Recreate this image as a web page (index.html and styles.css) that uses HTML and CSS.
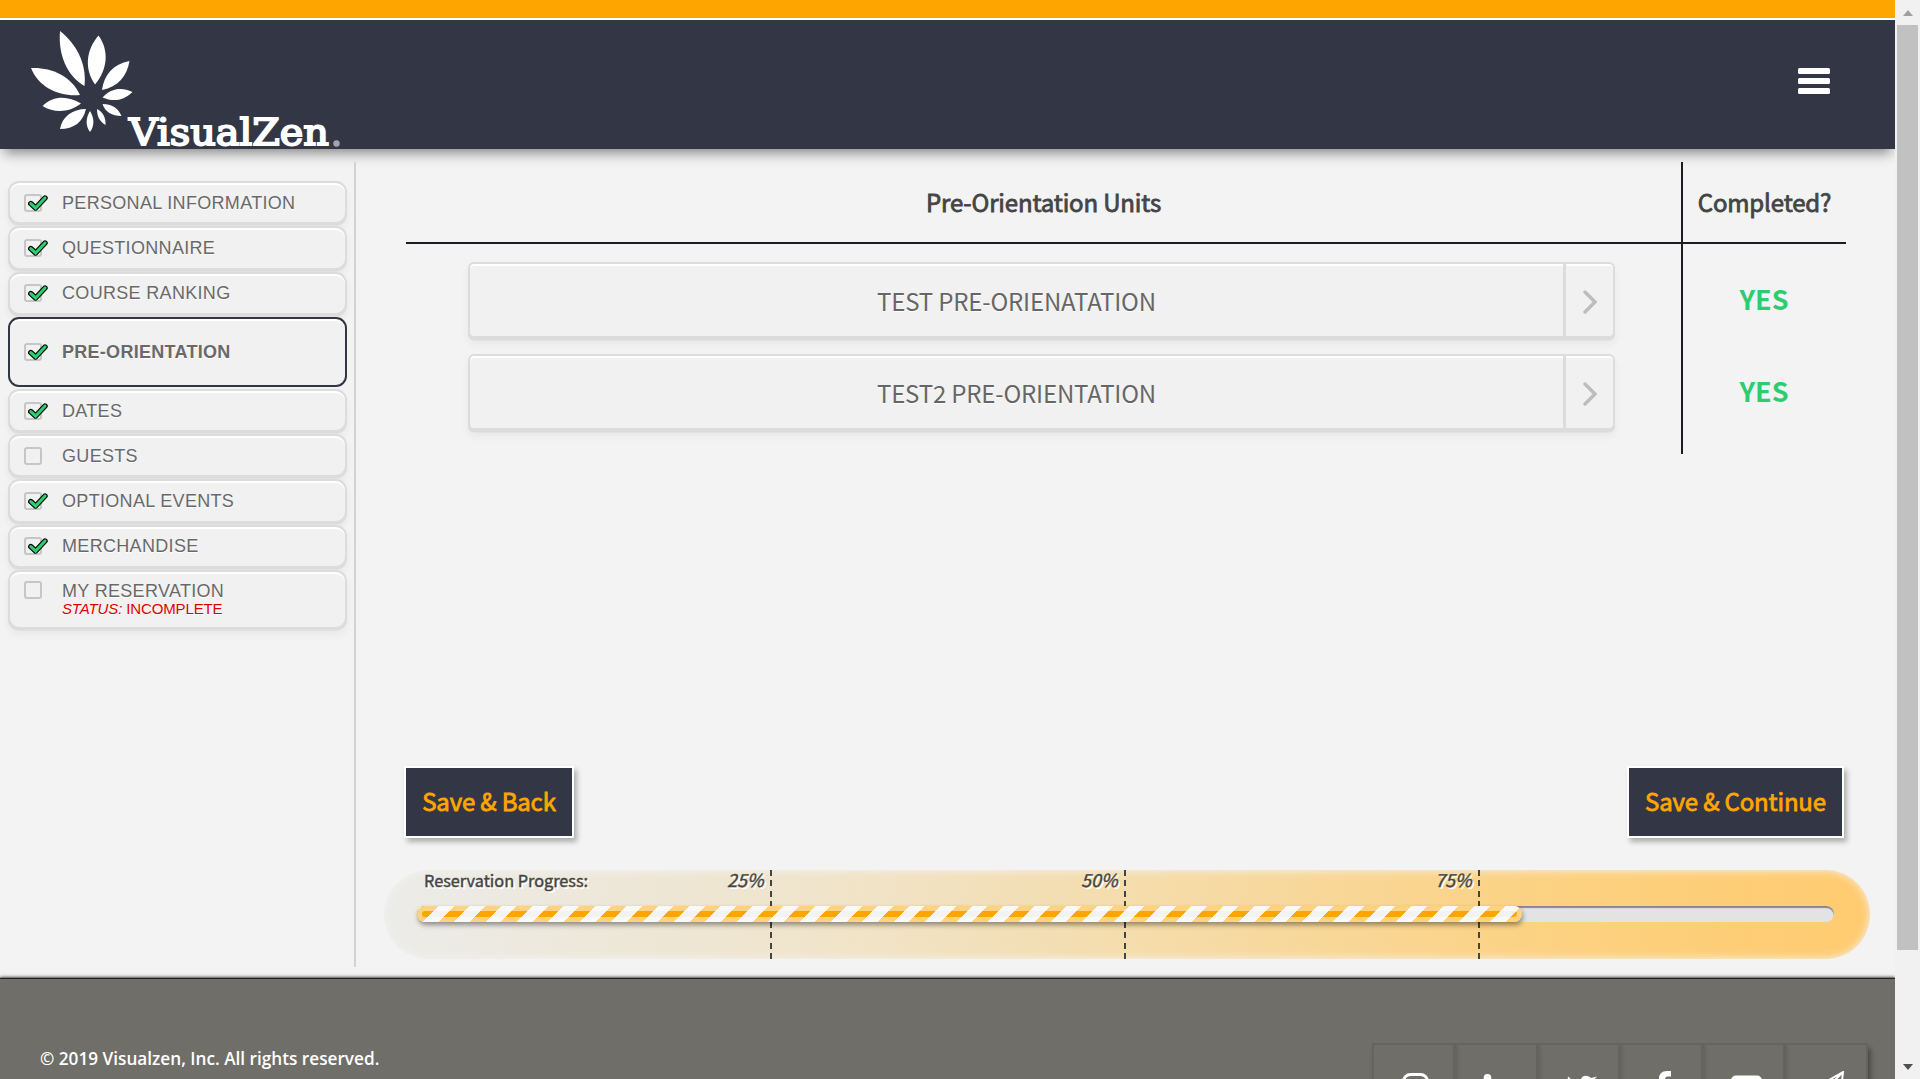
FILE: index.html
```html
<!DOCTYPE html>
<html lang="en">
<head>
<meta charset="utf-8">
<title>VisualZen - Pre-Orientation</title>
<link rel="stylesheet" href="styles.css">
</head>
<body>
<svg class="defs" width="0" height="0">
  <symbol id="tick" viewBox="0 0 20 16"><path d="M2.8 8.6 7.6 13 17 3" fill="none" stroke="#000" stroke-width="5.4" stroke-linecap="round" stroke-linejoin="round"/><path d="M2.8 8.6 7.6 13 17 3" fill="none" stroke="#2ecc71" stroke-width="3.2" stroke-linecap="round"/></symbol>
  <symbol id="chevron" viewBox="0 0 14 24"><path d="M2 2l10 10L2 22" fill="none" stroke="#bdbdbd" stroke-width="3.4" stroke-linecap="round"/></symbol>
</svg>
<div class="window">
  <div class="page">
    <div class="strip"></div>
    <header class="header">
      <svg class="logo" width="312" height="121" viewBox="30 28 312 121">
        <g fill="#fff">
          <path d="M60 31C75 43 87 62 84.500 86C67 76 58 55 60 31Z"/>
          <path d="M98.500 35.500C109 50 108 69 95 84.500C84 69 86 50 98.500 35.500Z"/>
          <path d="M31 68C50 67 71 75 80 95C60 97 39 88 31 68Z"/>
          <path d="M129.500 61C127 76 118 87 102 90C104 75 113 64 129.500 61Z"/>
          <path d="M132.500 92C123 101 113 102 102.500 97.500C111 88 122 87 132.500 92Z"/>
          <path d="M121.500 116C112 116 105 112 102.500 104C112 104 118 108 121.500 116Z"/>
          <path d="M42.500 106C54 95 68 96 81 103.500C69 113 54 113 42.500 106Z"/>
          <path d="M60 129C62 117 72 109 86 109C83 122 74 129 60 129Z"/>
          <path d="M90 111C94.500 118 94.500 126 90 132C85.500 126 85.500 118 90 111Z"/>
          <path d="M97 109C103 112 106 118 105.500 125C99 121 97 116 97 109Z"/>
        </g>
        <text class="logo-name" x="129" y="145" textLength="200" lengthAdjust="spacingAndGlyphs">VisualZen</text>
        <circle cx="336.500" cy="143.500" r="3.200" fill="#a3a5ae"/>
      </svg>
      <div class="menu"><i></i><i></i><i></i></div>
    </header>
    <div class="body">
      <nav class="steps">
        <div class="step"><span class="box"><svg><use href="#tick"/></svg></span><span>PERSONAL INFORMATION</span></div>
        <div class="step"><span class="box"><svg><use href="#tick"/></svg></span><span>QUESTIONNAIRE</span></div>
        <div class="step"><span class="box"><svg><use href="#tick"/></svg></span><span>COURSE RANKING</span></div>
        <div class="step active"><span class="box"><svg><use href="#tick"/></svg></span><span>PRE-ORIENTATION</span></div>
        <div class="step"><span class="box"><svg><use href="#tick"/></svg></span><span>DATES</span></div>
        <div class="step"><span class="box"></span><span>GUESTS</span></div>
        <div class="step"><span class="box"><svg><use href="#tick"/></svg></span><span>OPTIONAL EVENTS</span></div>
        <div class="step"><span class="box"><svg><use href="#tick"/></svg></span><span>MERCHANDISE</span></div>
        <div class="step last"><span class="box"></span><span>MY RESERVATION<small><em>STATUS:</em> INCOMPLETE</small></span></div>
      </nav>
      <main class="main">
        <section class="units">
          <div class="head"><span class="faux">Pre-Orientation Units</span></div>
          <div class="head done-head"><span class="faux">Completed?</span></div>
          <div class="list">
            <div class="unit"><span class="name">TEST PRE-ORIENATATION</span><span class="go"><svg width="14" height="24"><use href="#chevron"/></svg></span></div>
            <div class="unit"><span class="name">TEST2 PRE-ORIENTATION</span><span class="go"><svg width="14" height="24"><use href="#chevron"/></svg></span></div>
          </div>
          <div class="done"><span>YES</span><span>YES</span></div>
        </section>
        <div class="actions"><span class="btn back">Save &amp; Back</span><span class="btn next">Save &amp; Continue</span></div>
        <section class="progress">
          <div class="mark q1"><em>25%</em></div>
          <div class="mark q2"><em>50%</em></div>
          <div class="mark q3"><em>75%</em></div>
          <span class="label">Reservation Progress:</span>
          <div class="track"><div class="fill"></div></div>
        </section>
      </main>
    </div>
    <footer class="footer">
      <span class="copy">© 2019 Visualzen, Inc. All rights reserved.</span>
      <div class="social">
        <span><svg width="32" height="32" viewBox="0 0 32 32"><rect x="3.500" y="3.500" width="24" height="24" rx="7" fill="none" stroke="#fff" stroke-width="3"/></svg></span>
        <span><svg width="32" height="32" viewBox="0 0 32 32"><circle cx="4.500" cy="6.800" r="3.800" fill="#fff"/><path d="M1 13h7v17H1z" fill="#fff"/></svg></span>
        <span><svg width="32" height="32" viewBox="0 0 32 32"><path d="M31 5.500l-4 4C27 22 16 30 2 26c4 0 7-1 8-3-8-3-9-11-8-17.500 4 4 8 5.500 13 5.500-1-7 6-8 10-4z" fill="#fff"/></svg></span>
        <span><svg width="32" height="32" viewBox="0 0 32 32"><path d="M23 0v5.500h-3q-3 0-3 3V13h6v6h-6v13h-6V19H6v-6h5V8q0-8 8-8z" fill="#fff"/></svg></span>
        <span><svg width="32" height="32" viewBox="0 0 32 32"><rect x="0" y="4.500" width="31" height="22" rx="5" fill="#fff"/></svg></span>
        <span><svg width="32" height="32" viewBox="0 0 32 32"><path d="M30 1 2 17l8 4L30 1 27 28l-9-4-5 6v-8" fill="none" stroke="#fff" stroke-width="2"/></svg></span>
      </div>
    </footer>
  </div>
  <div class="scroll"><i class="up"></i><i class="thumb"></i><i class="down"></i></div>
</div>
</body>
</html>
```
FILE: styles.css
```css
* { box-sizing: border-box; }
body { margin: 0; overflow: hidden; font-family: "Noto Sans CJK SC", sans-serif; background: #f3f3f3; }
.defs { position: absolute; }
.window { display: flex; width: 1920px; height: 1079px; overflow: hidden; }
.page { width: 1895px; height: 1079px; display: flex; flex-direction: column; overflow: hidden; }
.strip { flex: none; height: 20px; background: #ffa500; border-bottom: 2px solid #fff; }
.header { flex: none; height: 129px; background: #333645; padding: 8px 65px 0 30px; display: flex; justify-content: space-between; box-shadow: 0 8px 12px -4px rgba(0,0,0,.45); }
.logo { overflow: visible; }
.logo-name { font: 400 37px "DejaVu Serif", serif; fill: #fff; stroke: #fff; stroke-width: 1.900px; }
.menu { display: flex; flex-direction: column; gap: 4.300px; padding-top: 40px; }
.menu i { width: 32px; height: 5.800px; background: #fff; border-radius: 1.500px; }
.body { flex: none; height: 830px; display: flex; padding-top: 13px; }
.steps { width: 356px; height: 805px; padding: 19px 8px 0; border-right: 2px solid #d3d3d3; display: flex; flex-direction: column; gap: 2px; }
.step { flex: none; width: 339px; height: 43.300px; padding-left: 14px; border: 2px solid #dcdcdc; border-radius: 11px; background: #f1f1f1; box-shadow: inset 0 2px 0 #fff, 0 1.500px 0 #dcdcdc, 0 5px 9px rgba(0,0,0,.05); display: flex; align-items: center; gap: 20px; font: 18px/20px "Liberation Sans", Arial, sans-serif; color: #696969; text-shadow: 0 1px 0 #fff; letter-spacing: .32px; }
.step.active { height: 70px; border-color: #333645; font-weight: 700; letter-spacing: .28px; box-shadow: inset 0 2px 0 #fff; }
.step.last { height: 59px; align-items: flex-start; padding-top: 9px; }
.step small { display: block; font-size: 15px; line-height: 16px; color: #e00000; letter-spacing: -.13px; }
.box { flex: none; width: 18px; height: 18px; border: 2px solid #c6c6c6; border-radius: 3px; position: relative; }
.box svg { position: absolute; left: 2px; top: -1px; width: 20px; height: 16px; }
.main { flex: 1; padding-left: 28px; }
.units { margin-left: 22px; width: 1440px; height: 292px; display: grid; grid-template-columns: 1275px 165px; grid-template-rows: 82px 210px; }
.head { border-bottom: 2px solid #1b1c20; display: flex; justify-content: center; font-size: 24px; line-height: 80px; letter-spacing: -.15px; color: #444; }
.faux { -webkit-text-stroke: .8px currentColor; }
.done-head, .done { border-left: 2px solid #1b1c20; }
.list { padding: 18px 66px 0 62px; display: flex; flex-direction: column; gap: 16px; }
.unit { height: 76px; border: 2px solid #dcdcdc; border-radius: 6px; background: #f1f1f1; box-shadow: inset 0 2px 0 #fff, 0 2.500px 0 #dcdcdc, 0 6px 10px rgba(0,0,0,.05); display: flex; }
.name { flex: 1; text-align: center; line-height: 74px; font-size: 24px; letter-spacing: -.18px; color: #666; text-shadow: 0 1px 0 #fff; }
.go { width: 50px; border-left: 3px solid #dcdcdc; display: flex; align-items: center; justify-content: center; padding-top: 4px; }
.done { display: flex; flex-direction: column; align-items: center; padding: 18px 1px 0 0; font-size: 27px; font-weight: 700; line-height: 73px; gap: 19px; color: #2ecc71; }
.actions { height: 72px; margin: 312px 51px 0 20px; display: flex; justify-content: space-between; }
.btn { height: 72px; border: 2px solid #fff; background: #333645; color: #ffa500; font-size: 24px; line-height: 66px; letter-spacing: -.16px; text-align: center; box-shadow: 3px 4px 5px rgba(0,0,0,.28); -webkit-text-stroke: .8px currentColor; }
.back { width: 170px; }
.next { width: 217px; }
.progress { position: relative; margin-top: 32px; width: 1486px; height: 89px; padding: 36px 36px 0 33px; border-radius: 45px; background: linear-gradient(90deg, rgba(226,226,220,.45), rgba(238,220,180,.65) 30%, #fcd180 80%, #ffcb70); box-shadow: inset 0 0 9px #f3f3f3; }
.label { position: absolute; left: 40px; top: 0; font-size: 16.300px; line-height: 21px; color: #444; -webkit-text-stroke: .4px #444; text-shadow: 2px 2px 0 #fff; }
.mark { position: absolute; top: 0; width: 60px; height: 89px; text-align: right; padding-right: 8.500px; font-size: 18px; line-height: 19px; color: #444; text-shadow: 2px 2px 0 #fff; background: repeating-linear-gradient(180deg, #444 0 6px, transparent 6px 10.400px) right / 2px 100% no-repeat; -webkit-text-stroke: .4px #444; }
.q1 { left: 328px; }
.q2 { left: 682px; }
.q3 { left: 1036px; }
.track { position: relative; height: 16px; border-radius: 8px; background: #e3e3e3; box-shadow: inset 0 2px 1px #888; }
.fill { width: 1105px; height: 16px; border-radius: 8px; background: repeating-linear-gradient(135deg, #f3f3f3 -7.100px 4px, #ffa500 4px 15.100px); box-shadow: inset 0 0 0 5px rgba(255,255,255,.5), 1px 3px 5px rgba(0,0,0,.4); }
.footer { position: relative; flex: 1; background: #6f6e69; box-shadow: 0 -1px 1px #222, 0 -2px 3px #555; display: flex; justify-content: space-between; padding: 64px 27px 0 40px; }
.copy { font: 600 17.200px/32px "Open Sans", sans-serif; color: #fff; }
.social { display: flex; height: 80px; box-shadow: 3px 6px 5px rgba(0,0,0,.25); }
.social span { width: 82.600px; border: 2px solid #65645f; padding: 26px 0 0 26px; box-shadow: 2px 4px 4px rgba(0,0,0,.12); }
.scroll { width: 25px; background: #f1f1f1; padding: 10px 2px 9px; display: flex; flex-direction: column; align-items: center; }
.up { border: 5.500px solid transparent; border-top: 0; border-bottom: 6px solid #a0a0a0; }
.thumb { margin-top: 9px; width: 21px; height: 925px; background: #c1c1c1; }
.down { margin-top: auto; border: 5.500px solid transparent; border-bottom: 0; border-top: 6px solid #505050; }
```
